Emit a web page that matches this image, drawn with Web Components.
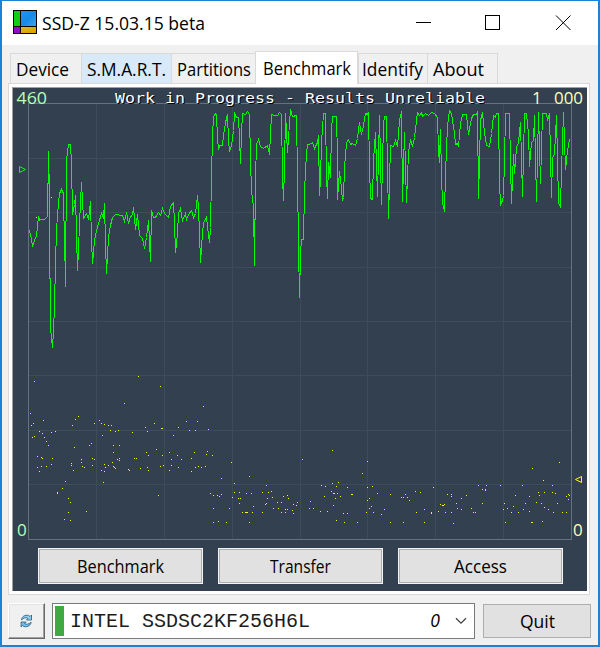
<!DOCTYPE html>
<html lang="en">
<head>
<meta charset="utf-8">
<title>SSD-Z 15.03.15 beta</title>
<style>
  html, body { margin: 0; height: 100%; }
  body { font-family: "Open Sans", "Noto Sans", sans-serif; font-size: 17px; color: #000; }
</style>
</head>
<body>
<app-window>
  <title-bar slot="title"><ui-text w="163">SSD-Z 15.03.15 beta</ui-text></title-bar>
  <tab-strip>
    <tab-item style="width:71px"><ui-text w="53">Device</ui-text></tab-item>
    <tab-item hot style="width:90px"><ui-text w="79">S.M.A.R.T.</ui-text></tab-item>
    <tab-item style="width:84px"><ui-text w="74">Partitions</ui-text></tab-item>
    <tab-item selected style="width:103px"><ui-text w="88">Benchmark</ui-text></tab-item>
    <tab-item style="width:69px"><ui-text w="61">Identify</ui-text></tab-item>
    <tab-item style="width:70px"><ui-text w="51">About</ui-text></tab-item>
  </tab-strip>
  <tab-pane>
    <bench-chart></bench-chart>
    <push-button outlined><ui-text w="87">Benchmark</ui-text></push-button>
    <push-button outlined><ui-text w="61">Transfer</ui-text></push-button>
    <push-button outlined><ui-text w="53">Access</ui-text></push-button>
  </tab-pane>
  <refresh-button slot="footer"></refresh-button>
  <drive-select slot="footer" index="0">INTEL SSDSC2KF256H6L</drive-select>
  <push-button slot="footer" style="width:108px;height:34px"><ui-text w="35">Quit</ui-text></push-button>
</app-window>

<script>
  // One line of text stretched to a given width
  class UiText extends HTMLElement {
    connectedCallback() {
      const w = this.getAttribute('w');
      this.attachShadow({ mode: 'open' }).innerHTML = `
        <style>
          :host { display: block; height: 24px; }
          svg { display: block; overflow: visible; }
          text { font-family: inherit; font-size: 17.5px; fill: currentColor; }
        </style>
        <svg width="${w}" height="24"><text x="0" y="18.500" textLength="${w}" lengthAdjust="spacingAndGlyphs">${this.textContent}</text></svg>
      `;
    }
  }

  class AppWindow extends HTMLElement {
    constructor() {
      super();
      this.attachShadow({ mode: 'open' }).innerHTML = `
        <style>
          :host {
            display: flex;
            flex-direction: column;
            box-sizing: border-box;
            width: 600px;
            height: 647px;
            border: solid #1883d7;
            border-width: 1px 2px 2px;
            background: #f0f0f0;
          }
          main { padding: 6px 8px 0 6px; height: 552px; box-sizing: border-box; }
          footer { display: flex; align-items: center; height: 36px; padding: 6px 7px 0 6px; }
          ::slotted(drive-select) { margin: 0 8px 0 7px; }
        </style>
        <slot name="title"></slot>
        <main><slot></slot></main>
        <footer><slot name="footer"></slot></footer>
      `;
    }
  }

  class TitleBar extends HTMLElement {
    constructor() {
      super();
      this.attachShadow({ mode: 'open' }).innerHTML = `
        <style>
          :host { display: flex; align-items: center; height: 44px; background: #fff; padding: 0 27px 0 11px; box-sizing: border-box; }
          .logo { margin: -2px 5px 0 0; }
          .controls { margin-left: auto; }
          svg { display: block; }
        </style>
        <svg class="logo" width="24" height="24" shape-rendering="crispEdges">
          <defs>
            <linearGradient id="b" x2="1" y2="1"><stop offset="0" stop-color="#2196f0"/><stop offset=".5" stop-color="#168ae8"/><stop offset="1" stop-color="#3ba2e8"/></linearGradient>
            <linearGradient id="y" x2="1" y2="1"><stop offset="0" stop-color="#e0b818"/><stop offset="1" stop-color="#d6a000"/></linearGradient>
          </defs>
          <rect width="24" height="24" fill="#000"/>
          <rect x="1" y="1" width="6" height="15" fill="#0fce14"/>
          <rect x="8" y="1" width="15" height="15" fill="url(#b)"/>
          <rect x="1" y="17" width="6" height="6" fill="#9408c8"/>
          <rect x="8" y="17" width="15" height="6" fill="url(#y)"/>
        </svg>
        <slot></slot>
        <svg class="controls" width="156" height="16" fill="none" stroke="#000">
          <path d="M1 7.5h15" shape-rendering="crispEdges"/>
          <rect x="70.5" y=".5" width="14" height="14" shape-rendering="crispEdges"/>
          <path d="M141 .5l14.5 14.5M155.500 .5l-14.500 14.500"/>
        </svg>
      `;
    }
  }

  class TabStrip extends HTMLElement {
    constructor() {
      super();
      this.attachShadow({ mode: 'open' }).innerHTML = `
        <style>:host { display: flex; align-items: flex-end; height: 32px; padding-left: 2px; }</style>
        <slot></slot>
      `;
    }
  }

  class TabItem extends HTMLElement {
    constructor() {
      super();
      this.attachShadow({ mode: 'open' }).innerHTML = `
        <style>
          :host {
            display: block;
            box-sizing: border-box;
            height: 30px;
            padding: 3px 0 0 5px;
            border: 1px solid #d9d9d9;
            border-width: 1px 0 0 1px;
            background: #f0f0f0;
          }
          :host([hot]) { background: #d8eaf9; }
          :host([selected]) { height: 33px; margin-bottom: -1px; padding: 4px 0 0 7px; background: #fff; position: relative; border-right-width: 1px; }
          :host(:nth-of-type(5)) { padding-left: 3px; }
          :host(:last-of-type) { border-right-width: 1px; width: 71px !important; }
        </style>
        <slot></slot>
      `;
    }
  }

  class TabPane extends HTMLElement {
    constructor() {
      super();
      this.attachShadow({ mode: 'open' }).innerHTML = `
        <style>
          :host {
            display: block;
            box-sizing: border-box;
            width: 582px;
            height: 512px;
            padding: 3px 2px 3px 3px;
            border: 1px solid #d9d9d9;
            background: #fff;
          }
          .panel {
            display: grid;
            grid-template-columns: repeat(3, 165px);
            grid-template-rows: 460px 36px;
            column-gap: 15px;
            justify-content: start;
            box-sizing: border-box;
            width: 575px;
            height: 504px;
            padding-left: 25px;
            border: solid #a0a0a0;
            border-width: 1px 0 0 1px;
            background: #324050;
          }
          ::slotted(bench-chart) { grid-column: 1 / -1; margin-left: -25px; }
        </style>
        <div class="panel"><slot></slot></div>
      `;
    }
  }

  class PushButton extends HTMLElement {
    constructor() {
      super();
      this.attachShadow({ mode: 'open' }).innerHTML = `
        <style>
          :host {
            display: flex;
            align-items: center;
            justify-content: center;
            box-sizing: border-box;
            border: 1px solid #adadad;
            background: #e1e1e1;
          }
          :host([outlined]) { margin: 1px; outline: 1px solid #f4f4f4; }
        </style>
        <slot></slot>
      `;
    }
  }

  class RefreshButton extends HTMLElement {
    constructor() {
      super();
      this.attachShadow({ mode: 'open' }).innerHTML = `
        <style>
          :host {
            display: flex;
            align-items: center;
            justify-content: center;
            box-sizing: border-box;
            width: 37px;
            height: 36px;
            border: 1px solid;
            border-color: #fff #696969 #696969 #fff;
            box-shadow: inset -1px -1px #a0a0a0, inset 1px 1px #e3e3e3;
          }
        </style>
        <svg width="13" height="14" viewBox="0 0 13 14" stroke-linejoin="round">
          <path d="M1.500 5.800C1.700 2.800 5 .4 8.600 1.500L10 2.500 11.500 1v5H6.500L8 4.400C6 3 3.500 4 1.500 5.800z" fill="#8fd0f2" stroke="#35627f" stroke-width=".9"/>
          <path d="M1.500 5.800C1.700 2.800 5 .4 8.600 1.500L10 2.500 11.500 1v5H6.500L8 4.400C6 3 3.500 4 1.500 5.800z" transform="rotate(180 6.300 7)" fill="#6fc0ee" stroke="#35627f" stroke-width=".9"/>
        </svg>
      `;
    }
  }

  class DriveSelect extends HTMLElement {
    connectedCallback() {
      this.attachShadow({ mode: 'open' }).innerHTML = `
        <style>
          :host {
            display: flex;
            align-items: center;
            box-sizing: border-box;
            width: 423px;
            height: 36px;
            padding: 0 7px 0 2px;
            border: 1px solid #7a7a7a;
            background: #fff;
          }
          .health { width: 9px; height: 30px; margin-right: 6px; background: #41a941; }
          .name { font: 20px/30px "Courier New", "Liberation Mono", monospace; white-space: pre; color: #1c1c1c; padding-top: 2px; }
          .index { margin-left: auto; margin-right: 15px; font-size: 17.5px; font-style: italic; line-height: 30px; padding-bottom: 3px; }
          svg { display: block; }
        </style>
        <div class="health"></div>
        <div class="name"><slot></slot></div>
        <div class="index">${this.getAttribute('index')}</div>
        <svg width="12" height="8" fill="none" stroke="#444" stroke-width="1.300"><path d="M1 1.200l5 5 5-5"/></svg>
      `;
    }
  }

  // Transfer speed, x,y pairs in window pixels
  const SPEED = `29,230 31,238 32,246 35,237 36,236 37,226 38,216 39,220 40,219 44,219 47,216 47,183 48,183 48,151 49,195 49,278
    50,278 50,327 52,347 53,331 54,305 55,263 56,229 58,202 59,193 61,189 63,193 63,207 64,233 65,286 66,160 68,144 70,144 71,162
    72,214 74,204 75,195 76,233 77,270 78,250 79,223 81,182 83,218 86,213 88,219 90,201 91,240 92,263 94,240 96,230 101,213 103,217
    104,203 105,243 106,273 108,237 110,225 112,217 115,214 122,215 124,221 126,212 128,223 130,216 132,215 133,207 135,229 137,214
    139,235 142,238 144,248 146,237 148,220 150,261 151,210 153,217 155,217 158,212 160,215 162,208 164,213 168,217 170,206 173,202
    174,223 175,252 177,233 178,213 180,208 182,220 185,213 186,219 188,214 191,210 193,217 195,213 197,195 198,207 199,233 200,262
    202,232 203,223 206,216 207,227 209,242 210,227 211,177 212,135 213,116 215,113 216,115 217,137 218,149 219,145 222,145 223,135
    225,122 227,114 228,140 229,151 231,145 233,130 234,113 236,117 238,117 239,137 240,163 241,133 242,113 245,114 247,111 249,114
    250,160 251,190 253,207 254,265 255,177 256,144 258,139 260,146 263,148 267,145 269,154 270,133 271,114 274,115 277,115 279,112
    281,114 282,177 283,200 284,167 285,113 286,132 287,152 289,123 290,109 292,116 296,115 297,175 298,245 299,297 300,253 301,239
    303,239 304,190 306,153 307,144 309,144 312,142 314,148 317,142 318,135 319,195 320,178 321,142 323,113 325,113 326,175 327,198
    328,162 330,177 331,130 332,116 336,116 337,157 337,199 339,171 341,188 342,200 343,197 344,167 346,142 348,139 350,144 352,143
    355,145 357,138 359,122 361,134 363,125 365,113 367,114 368,112 369,167 370,198 372,199 373,160 375,132 377,196 379,115 381,204
    383,123 384,116 386,116 387,167 388,218 390,145 393,146 395,140 397,146 399,120 401,111 402,201 404,132 406,202 408,152 410,139
    412,146 414,137 417,112 419,115 421,112 422,116 425,113 428,115 431,112 434,113 437,117 438,150 439,162 440,129 441,177 442,202
    444,211 445,173 447,125 449,110 451,113 454,133 455,144 457,143 458,146 460,123 462,114 466,114 468,134 471,118 473,114 476,114
    477,111 478,198 479,160 480,120 482,112 484,132 486,145 489,146 491,133 493,115 495,117 496,113 498,113 499,182 500,204 502,200
    503,195 504,160 505,113 509,113 510,163 511,203 513,154 514,173 516,147 518,142 520,122 522,196 524,113 526,113 528,133 529,166
    531,142 533,140 534,115 536,201 538,112 540,183 542,113 546,113 547,120 549,113 551,197 552,158 554,153 556,115 558,202 560,207
    561,170 563,112 565,169 567,150 569,139`;

  // Access time samples
  const ACCESS = `51,197 36,217 34,381 30,413 33,423 31,425 43,420 32,437 34,436 39,431 42,433 44,437 46,441 48,445 51,432 55,431 72,425
    75,419 78,416 74,447 89,445 91,443 94,423 99,420 101,423 104,424 108,425 111,425 110,430 115,431 118,430 102,435 113,445 119,445
    113,452 124,403 138,376 160,386 203,406 132,432 145,427 147,431 154,423 161,428 162,428 173,435 178,427 186,421 197,421 189,430
    195,430 208,429 37,456 41,457 42,458 52,458 37,467 41,466 46,466 51,464 39,471 71,463 71,465 73,470 81,459 81,462 82,466 84,467
    92,458 94,459 92,465 101,470 104,464 105,467 104,471 108,465 112,462 113,466 114,467 115,468 117,459 119,458 119,460 128,469
    129,470 134,458 136,458 140,468 146,452 148,455 147,467 148,470 156,449 162,455 160,466 163,465 169,452 177,455 171,459 181,459
    171,465 169,470 178,467 194,452 191,458 191,471 195,467 198,466 201,467 205,466 206,454 207,451 212,455 65,481 62,488 57,492
    57,493 68,498 70,502 68,512 64,519 70,520 86,511 103,482 158,495 210,493 213,495 217,495 219,496 213,508 213,522 218,521 231,462
    221,478 249,476 234,483 266,485 221,494 229,508 226,522 232,497 234,492 239,492 238,498 240,498 239,503 246,493 251,493 253,506
    242,512 245,512 246,512 247,512 252,512 249,522 262,492 268,492 271,491 267,498 272,497 265,504 266,503 262,512 273,508 278,508
    277,502 281,502 283,496 287,495 288,498 285,509 287,509 281,512 285,512 292,510 293,504 293,513 296,505 297,502 302,459 332,450
    362,473 367,461 310,501 309,508 313,508 320,511 327,511 321,485 325,486 332,483 336,486 338,482 347,487 324,496 331,491 333,493
    334,493 337,493 335,498 340,496 351,494 352,494 333,505 343,513 347,513 336,520 344,522 357,522 367,487 372,486 377,493 390,494
    367,500 369,498 371,506 369,508 366,512 373,512 381,514 384,509 390,522 401,497 403,497 405,494 407,497 409,500 415,491 420,492
    433,487 424,509 416,512 431,512 431,513 403,522 424,522 438,511 440,504 442,505 443,505 444,504 447,494 451,494 451,496 445,512
    451,512 453,523 456,503 457,508 461,509 461,498 466,495 471,508 473,512 475,512 478,485 486,485 482,489 485,489 485,490 482,503
    500,485 522,485 552,485 504,503 503,509 507,508 505,522 511,512 513,506 515,495 518,512 523,509 525,503 529,496 529,511 531,522
    532,522 532,468 543,480 559,462 536,502 538,492 539,495 544,492 541,503 544,507 542,521 548,509 552,492 555,493 557,503 553,512
    562,512 566,512 566,496 568,494 569,495 568,499`;

  class BenchChart extends HTMLElement {
    constructor() {
      super();
      const left = 28, top = 103, width = 543, height = 436;
      let grid = '';
      for (let i = 1; i < 8; i++) {
        grid += `M${Math.round(left + width * i / 8) + 0.5} ${top}v${height}`;
        grid += `M${left} ${Math.round(top + 0.5 + (height - 1) * i / 8) + 0.5}h${width}`;
      }
      const line = SPEED.trim().split(/\s+/).map(p => p.split(',').map(v => +v + 0.5).join(',')).join(' ');
      const dots = ACCESS.trim().split(/\s+/).map(p => {
        const [x, y] = p.split(',');
        return `M${x} ${y}h1v1h-1z`;
      }).join('');
      this.attachShadow({ mode: 'open' }).innerHTML = `
        <style>
          :host { display: block; height: 460px; width: 574px; }
          svg { display: block; overflow: visible; }
          text { font-family: inherit; font-size: 17px; }
          .banner { font-family: "DejaVu Sans Mono", monospace; font-size: 13.700px; fill: #fff; }
          .shade { fill: #000; }
          .speed { fill: #b8ffb8; }
          .access { fill: #ffffb8; }
          .wide { word-spacing: 8px; }
        </style>
        <svg width="574" height="460" viewBox="13 88 574 460">
          <g fill="none" shape-rendering="crispEdges">
            <path d="${grid}" stroke="#3d4c5b"/>
            <rect x="28.500" y="103.500" width="543" height="436" stroke="#64727f"/>
            <polyline points="${line}" stroke="#0f0"/>
            <path d="${dots}" fill="#ff0"/>
          </g>
          <path d="M19.500 166.500v6l6-3z" fill="none" stroke="#0f0"/>
          <path d="M581.500 476.500v6l-6-3z" fill="none" stroke="#ff0"/>
          <text class="speed" x="16.500" y="104" textLength="30.500" lengthAdjust="spacingAndGlyphs">460</text>
          <text class="speed" x="17" y="536">0</text>
          <text class="banner shade" aria-hidden="true" x="116" y="104" textLength="370" lengthAdjust="spacingAndGlyphs">Work in Progress - Results Unreliable</text>
          <text class="banner" x="115" y="103" textLength="370" lengthAdjust="spacingAndGlyphs">Work in Progress - Results Unreliable</text>
          <text class="access wide" x="532" y="104" textLength="51" lengthAdjust="spacingAndGlyphs">1 000</text>
          <text class="access" x="573" y="536">0</text>
        </svg>
      `;
    }
  }

  customElements.define('ui-text', UiText);
  customElements.define('app-window', AppWindow);
  customElements.define('title-bar', TitleBar);
  customElements.define('tab-strip', TabStrip);
  customElements.define('tab-item', TabItem);
  customElements.define('tab-pane', TabPane);
  customElements.define('push-button', PushButton);
  customElements.define('refresh-button', RefreshButton);
  customElements.define('drive-select', DriveSelect);
  customElements.define('bench-chart', BenchChart);
</script>
</body>
</html>
